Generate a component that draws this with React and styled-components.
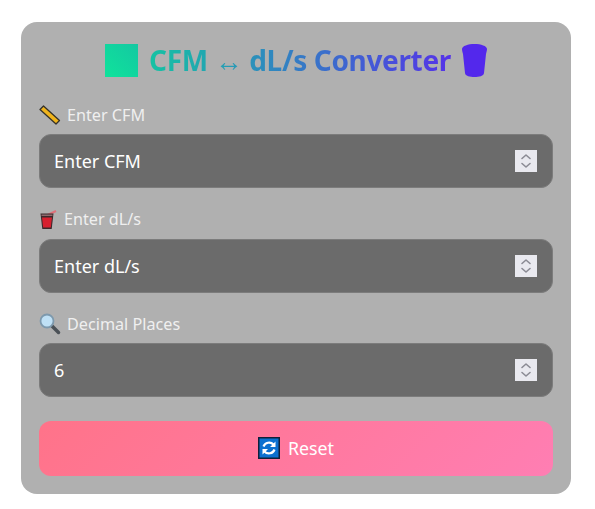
import React from "react";
import styled, { createGlobalStyle } from "styled-components";

const Global = createGlobalStyle`
  html, body { margin: 0; padding: 0; background: #fff; }
  * { box-sizing: border-box; }
`;
const Page = styled.div`
  width: 595px; height: 509px; padding: 22px 24px 15px 21px;
  font-family: "Noto Sans", "Open Sans", sans-serif;
`;
const Card = styled.main`
  height: 472px; background: #b0b0b0; border-radius: 16px;
  padding: 18px 18px;
  display: flex; flex-direction: column;
`;
const Title = styled.h1`
  margin: 0 0 24px; height: 40px;
  display: flex; align-items: center; justify-content: center; gap: 11px;
  font-size: 28px; font-weight: 700; letter-spacing: -0.35px; line-height: 40px;
`;
const TitleText = styled.span`
  background: linear-gradient(90deg, #15c2a3, #5533e8);
  -webkit-background-clip: text; background-clip: text; color: transparent;
`;
const Field = styled.div`
  display: flex; flex-direction: column; margin-bottom: 20.5px;
`;
const Label = styled.label`
  height: 21px; margin-bottom: 9px; display: flex; align-items: center; gap: 6px;
  font-size: 16.2px; line-height: 20px; color: #efefef;
`;
const InputWrap = styled.div`
  position: relative; height: 54px;
`;
const InputBox = styled.input`
  width: 100%; height: 100%; padding: 0 14px;
  background: #6b6b6b; color: #fff; border: 1px solid #7c7c7c; border-radius: 12px;
  font: 400 18px "Noto Sans", sans-serif; outline: none;
  appearance: textfield;
  &::placeholder { color: #fff; opacity: 1; }
  &::-webkit-inner-spin-button, &::-webkit-outer-spin-button { appearance: none; margin: 0; }
`;
const Stepper = styled.span`
  position: absolute; right: 16px; top: 16px; width: 22px; height: 22px;
  background: #e9e9ef; display: flex; align-items: center; justify-content: center;
`;
const ResetButton = styled.button`
  margin-top: 3px; height: 55px; width: 100%; border: none; border-radius: 12px;
  background: linear-gradient(135deg, #ff7389, #ff7eb3); color: #fff;
  display: flex; align-items: center; justify-content: center; gap: 8px;
  font: 400 17.800px "Noto Sans", sans-serif;
`;

const Square = () => (
  <svg width="33" height="33" viewBox="0 0 33 33">
    <defs><linearGradient id="sq" x1="0" y1="1" x2="1" y2="0"><stop offset="0" stopColor="#0fe39b" /><stop offset="1" stopColor="#14c8a2" /></linearGradient></defs>
    <rect width="33" height="33" fill="url(#sq)" />
  </svg>
);
const Cup = () => (
  <svg width="25" height="33" viewBox="0 0 25 33">
    <path d="M0 5C0 2 6 0 12.500 0S25 2 25 5c0 2-.6 3-1 5l-2 19c-.2 3-5 4-9.500 4S3.200 32 3 29L1 10C.6 8 0 7 0 5z" fill="#5328ec" />
  </svg>
);
const Ruler = () => (
  <svg width="22" height="20" viewBox="0 0 22 20">
    <path d="M1 4.500 4.500 1 20.500 15.500 17 19z" fill="#f0b41c" stroke="#35322a" strokeWidth="1.300" strokeLinejoin="round" />
  </svg>
);
const Drink = () => (
  <svg width="19" height="21" viewBox="0 0 18 21">
    <path d="M8 6 16.500 2" stroke="#e0707a" strokeWidth="2.200" />
    <path d="M1 4.500h13l-1.800 15.500H2.800z" fill="#3a2a2c" />
    <path d="M2.500 8.500h10l-1.200 10H3.700z" fill="#d6202f" />
    <path d="M2 5.500h11v1.500H2z" fill="#8f6a6e" />
  </svg>
);
const Lens = () => (
  <svg width="22" height="22" viewBox="0 0 22 22">
    <path d="M13 13l6.500 6.500" stroke="#4b5157" strokeWidth="3.500" strokeLinecap="round" />
    <circle cx="8" cy="8" r="6.500" fill="#bfe0f5" stroke="#7d99ad" strokeWidth="1.800" />
  </svg>
);
const Refresh = () => (
  <svg width="22" height="22" viewBox="0 0 22 22">
    <rect x=".75" y=".75" width="20.500" height="20.500" fill="#0b70d0" stroke="#10203a" strokeWidth="1.500" />
    <path d="M5.500 9.500A6 6 0 0 1 15.500 7.500M16.500 12.500A6 6 0 0 1 6.500 14.500" fill="none" stroke="#fff" strokeWidth="2.200" />
    <path d="M17.500 4.500v5.500h-5.500zM4.500 17.500V12h5.500z" fill="#fff" />
  </svg>
);
const Chevrons = () => (
  <svg width="14" height="16" viewBox="0 0 14 16" fill="none" stroke="#8b8b94" strokeWidth="1.600" strokeLinecap="round" strokeLinejoin="round">
    <path d="M3 5.500 7 2l4 3.500M3 10.500 7 14l4-3.500" />
  </svg>
);

const fields = [
  { id: "cfm", icon: <Ruler />, label: "Enter CFM", placeholder: "Enter CFM" },
  { id: "dls", icon: <Drink />, label: "Enter dL/s", placeholder: "Enter dL/s" },
  { id: "dec", icon: <Lens />, label: "Decimal Places", value: "6" },
];

export default function App() {
  return (
    <Page>
      <Global />
      <Card>
        <Title><Square /><TitleText>CFM ↔ dL/s Converter</TitleText><Cup /></Title>
        {fields.map((f) => (
          <Field key={f.id}>
            <Label htmlFor={f.id}>{f.icon}{f.label}</Label>
            <InputWrap>
              <InputBox id={f.id} type="number" placeholder={f.placeholder} defaultValue={f.value} />
              <Stepper><Chevrons /></Stepper>
            </InputWrap>
          </Field>
        ))}
        <ResetButton><Refresh />Reset</ResetButton>
      </Card>
    </Page>
  );
}
